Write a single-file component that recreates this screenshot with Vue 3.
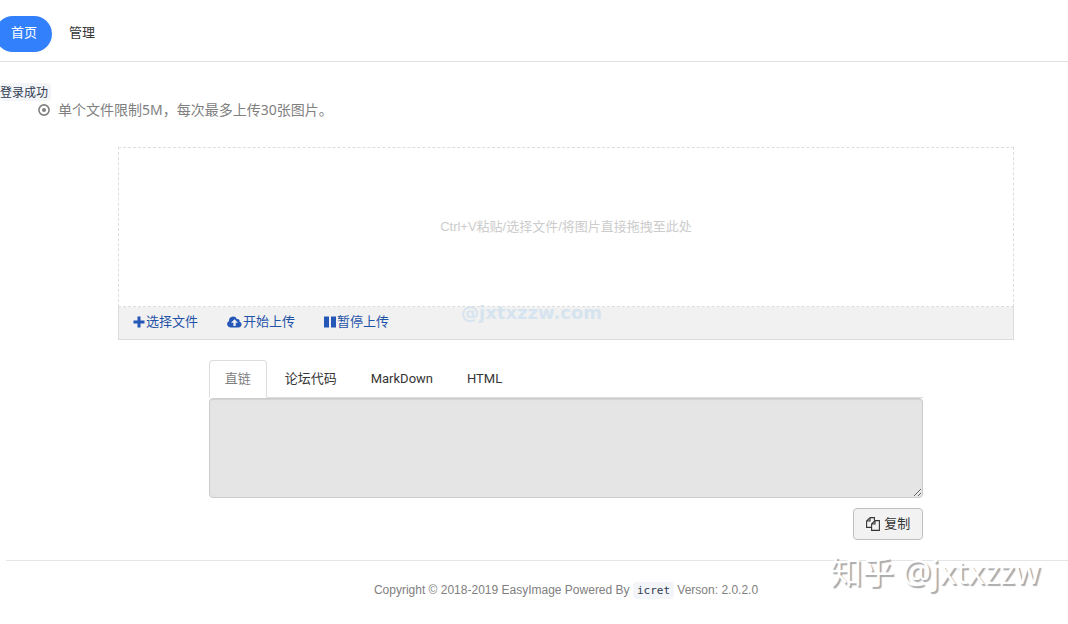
<script setup>
import { ref } from 'vue'

const tabs = ['直链', '论坛代码', 'MarkDown', 'HTML']
const active = ref(0)
const links = ref('')
</script>

<template>
  <div class="page">
    <header class="top">
      <nav class="nav">
        <a class="pill current" href="#">首页</a>
        <a class="pill" href="#">管理</a>
      </nav>
    </header>

    <code class="status">登录成功</code>

    <main class="container">
      <p class="hint">
        <svg class="dot" viewBox="0 0 12 12" aria-hidden="true">
          <circle cx="6" cy="6" r="5.1" fill="none" stroke="currentColor" stroke-width="1.6" />
          <circle cx="6" cy="6" r="2" fill="currentColor" />
        </svg>
        <span>单个文件限制5M，每次最多上传30张图片。</span>
      </p>

      <section class="uploader">
        <div class="drop">Ctrl+V粘贴/选择文件/将图片直接拖拽至此处</div>
        <div class="actions">
          <button type="button" class="action">
            <svg class="plus" viewBox="0 0 12 12" aria-hidden="true"><path d="M4.5 .5h3v4h4v3h-4v4h-3v-4h-4v-3h4z" /></svg>选择文件
          </button>
          <button type="button" class="action">
            <svg class="cloud" viewBox="0 0 15 12" aria-hidden="true"><path fill-rule="evenodd" d="M3.5 11.5A3.5 3.5 0 0 1 2 4.9 4.1 4.1 0 0 1 9.8 3 2.3 2.3 0 0 1 12.6 5.7 3 3 0 0 1 12 11.5ZM7.5 3.2 4 6.8H6.4V10H8.7V6.8H11Z" /></svg>开始上传
          </button>
          <button type="button" class="action">
            <svg class="pause" viewBox="0 0 12 12" aria-hidden="true"><path d="M0 .5h5v11H0zM7 .5h5v11H7z" /></svg>暂停上传
          </button>
          <span class="site-mark">@jxtxzzw.com</span>
        </div>
      </section>

      <section class="result">
        <div class="tabs" role="tablist">
          <button
            v-for="(tab, i) in tabs"
            :key="tab"
            type="button"
            role="tab"
            class="tab"
            :class="{ selected: active === i }"
            :aria-selected="active === i"
            @click="active = i"
          >{{ tab }}</button>
        </div>
        <textarea v-model="links" class="links" readonly :aria-label="tabs[active]"></textarea>
        <div class="copy-row">
          <button type="button" class="copy">
            <svg viewBox="0 0 14 14" aria-hidden="true">
              <path d="M4 .6H8.4V3.2M4 .6.6 4V10.4H5.4M4 .6V4H.6M9 3.6H13.4V13.4H5.6V7ZM9 3.6V7H5.6" />
            </svg>
            复制
          </button>
        </div>
      </section>

      <footer class="footer">
        Copyright © 2018-2019 EasyImage Powered By <code>icret</code> Verson: 2.0.2.0
        <span class="author-mark">知乎 @jxtxzzw</span>
      </footer>
    </main>
  </div>
</template>

<style>
body {
  background: #fff;
}
</style>

<style scoped>
.page {
  overflow: hidden;
  color: #353535;
  font: 13px/20px "Liberation Sans", "Noto Sans CJK SC", sans-serif;
}

button {
  font: inherit;
  cursor: pointer;
}

.top {
  padding: 16px 0 9px;
  border-bottom: 1px solid #e1e1e1;
}

.nav {
  display: flex;
  gap: 1px;
  margin-left: -5px;
}

.pill {
  padding: 7px 15px 9px 16px;
  border-radius: 18px;
  color: #353535;
  text-decoration: none;
  line-height: 20px;
}

.pill.current {
  background: #3280fc;
  color: #fff;
}

.status {
  display: table;
  margin-top: 21px;
  padding: 0 3px 0 0;
  border-radius: 4px;
  background: #f3f5f9;
  color: #313c52;
  font: 12px/18px "Noto Sans CJK SC", sans-serif;
}

.container {
  margin: 0 -58px 0 6px;
}

.hint {
  display: flex;
  align-items: center;
  gap: 8px;
  margin: 0;
  padding-left: 32px;
  color: #808080;
  font: 14px/18px "Noto Sans", "Noto Sans CJK SC", sans-serif;
}

.dot {
  width: 12px;
  height: 12px;
}

.uploader {
  width: 80%;
  margin: 28px auto 0;
}

.drop {
  display: flex;
  align-items: center;
  justify-content: center;
  height: 158px;
  border: 1px dashed #ddd;
  color: #ccc;
}

.actions {
  position: relative;
  display: flex;
  gap: 29px;
  height: 32px;
  padding: 0 14px;
  border: 1px solid #ddd;
  border-top: 0;
  background: #f1f1f1;
}

.action {
  display: flex;
  align-items: center;
  gap: 1px;
  padding: 0 0 2px;
  border: 0;
  background: none;
  color: #1f53a8;
}

.action svg {
  height: 12px;
  fill: #2457b8;
}

.plus,
.pause {
  width: 12px;
}

.cloud {
  width: 15px;
}

.site-mark {
  position: absolute;
  top: -4px;
  left: 342px;
  color: #d6e4f0;
  font: bold 18px/20px "DejaVu Sans", sans-serif;
}

.result {
  box-sizing: border-box;
  width: 66.667%;
  margin: 20px auto 0;
  padding: 0 16px;
}

.tabs {
  display: flex;
  gap: 2px;
  border-bottom: 1px solid #ddd;
}

.tab {
  margin-bottom: -1px;
  padding: 8px 15px;
  border: 1px solid transparent;
  border-radius: 4px 4px 0 0;
  background: none;
  color: #353535;
  font: 13px/20px Roboto, "Noto Sans CJK SC", sans-serif;
}

.tab.selected {
  border-color: #ddd #ddd #fff;
  background: #fff;
  color: #808080;
}

.links {
  display: block;
  box-sizing: border-box;
  width: 100%;
  height: 100px;
  margin: 0;
  padding: 5px 8px;
  border: 1px solid #ccc;
  border-radius: 4px;
  background: #e5e5e5;
  box-shadow: inset 0 1px 1px rgba(0, 0, 0, 0.08);
  resize: vertical;
}

.copy-row {
  display: flex;
  justify-content: flex-end;
  margin-top: 10px;
}

.copy {
  display: flex;
  align-items: center;
  gap: 4px;
  padding: 5px 12px;
  border: 1px solid #bfbfbf;
  border-radius: 4px;
  background: #f2f2f2;
  color: #353535;
}

.copy svg {
  width: 14px;
  height: 14px;
  fill: none;
  stroke: #353535;
  stroke-width: 1.1;
}

.footer {
  position: relative;
  margin-top: 20px;
  padding: 20px 0 24px;
  border-top: 1px solid #e5e5e5;
  color: #808080;
  font-size: 12px;
  line-height: 18px;
  text-align: center;
}

.footer code {
  padding: 2px 4px;
  border-radius: 4px;
  background: #f3f5f9;
  color: #313c52;
  font: 11px/18px "DejaVu Sans Mono", monospace;
}

.author-mark {
  position: absolute;
  top: -9px;
  right: 86px;
  color: #fff;
  font: 32px/40px "Noto Sans", "Noto Sans CJK SC", sans-serif;
  text-shadow: 2px 2px 1px #aaa;
  white-space: nowrap;
}
</style>
